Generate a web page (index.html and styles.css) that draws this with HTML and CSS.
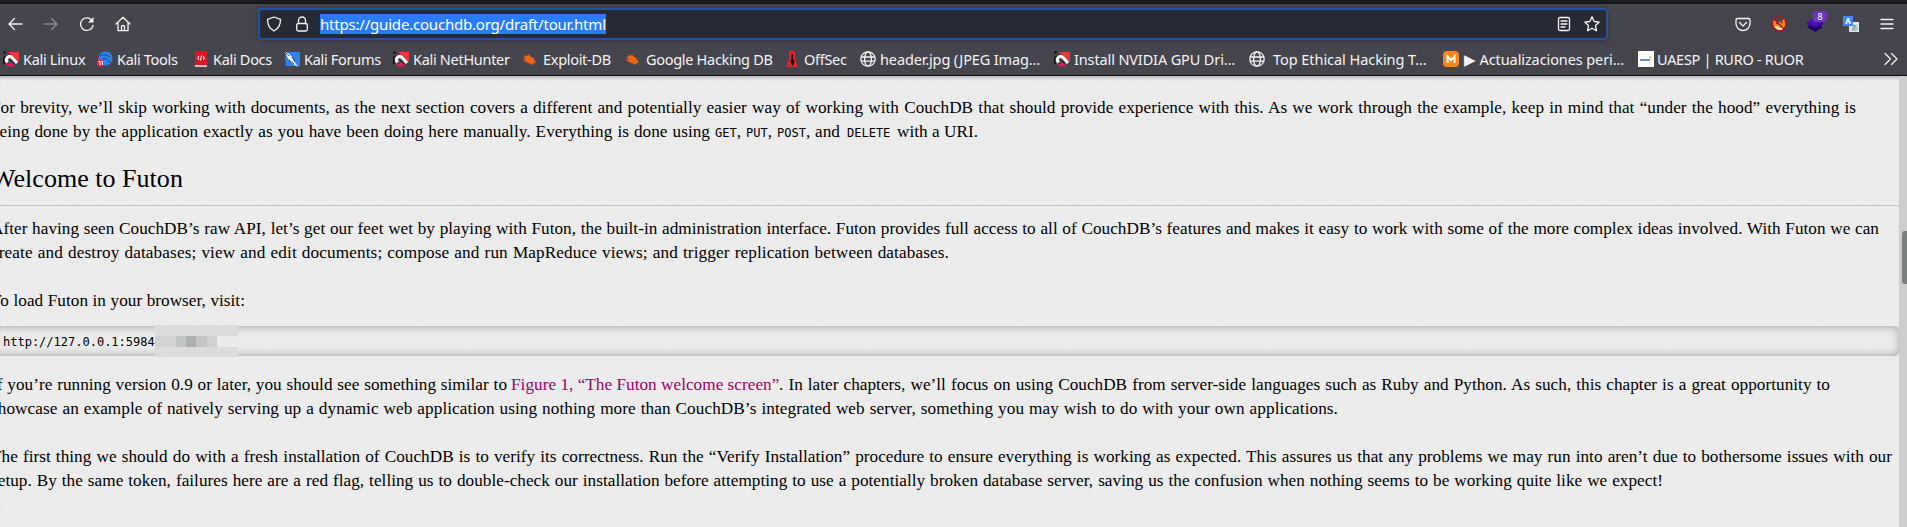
FILE: index.html
```html
<!DOCTYPE html>
<html lang="en">
<head>
<meta charset="utf-8">
<title>Getting Started</title>
<link rel="stylesheet" href="styles.css">
</head>
<body>
<svg width="0" height="0" class="defs">
  <symbol id="kali" viewBox="0 0 16 16"><path d="M5 1h11v10z" fill="#f2353a"/><path d="M0 1l2-1 1 2-2 1z" fill="#111"/><path d="M1.500 13A6 6 0 0 1 2.500 5" stroke="#111" stroke-width="1.500" fill="none"/><path d="M4.500 11.500C1.500 7.500 6 3.500 9 6.500L14 12" stroke="#fff" stroke-width="3" fill="none"/><path d="M2 12.500l4 3h7l-4-3.500-3-2 1 3z" fill="#dc1f50"/><path d="M6.500 8.500l4 4" stroke="#111" stroke-width="1" fill="none"/></symbol>
  <symbol id="bug" viewBox="0 0 16 16"><path d="M3 4.500l3 0 1-1.500 1 2 4 2.500 0 2 2 0-1 1 1 2-3-.5 0 2-3-1.500-2.500-.5-2.500-2-2-.5 2-1.500-1-1z" fill="#f06414"/><path d="M1 2l3 3M15 14l-3-3M0 8h4" stroke="#9b4a20" stroke-width=".7"/></symbol>
  <symbol id="globe" viewBox="0 0 16 16"><g fill="none" stroke="#f4f4f6" stroke-width="1.300"><circle cx="8" cy="8" r="7.200"/><ellipse cx="8" cy="8" rx="3.400" ry="7.200"/><path d="M1 6h14M1 10.200h14"/></g></symbol>
</svg>
<div class="tabs"></div>
<header class="nav">
  <div class="buttons">
    <svg class="i" viewBox="0 0 16 16"><path d="M15 8H2M7.500 2.500L2 8l5.500 5.500"/></svg>
    <svg class="i dim" viewBox="0 0 16 16"><path d="M1 8h13M8.500 2.500L14 8l-5.500 5.500"/></svg>
    <svg class="i" viewBox="0 0 16 16"><path d="M14 9.500A6.300 6.300 0 1 1 12.600 4"/><path d="M14.500 1v5.500H9z" class="solid"/></svg>
    <svg class="i" viewBox="0 0 16 16"><path d="M1 8l7-6.700L15 8M3 6.500V14.700h10V6.500M6.500 14.500v-4q0-1 1.500-1t1.500 1v4"/></svg>
  </div>
  <div class="url">
    <svg class="i" viewBox="0 0 16 16"><path d="M8 1l6.500 2.300C14.600 9 12 13 8 15 4 13 1.400 9 1.500 3.300z"/></svg>
    <svg class="i lock" viewBox="0 0 16 16"><rect x="2.700" y="7.500" width="10.600" height="7.500" rx="1.500"/><path d="M4.500 7.500V4.500a3.500 3.500 0 0 1 7 0v3"/></svg>
    <span class="address">https://guide.couchdb.org/draft/tour.html</span>
    <svg class="i reader" viewBox="0 0 16 16"><rect x="2.500" y="1.500" width="11" height="13" rx="1.500"/><path d="M5 5h6M5 8h6M5 11h4"/></svg>
    <svg class="i star" viewBox="0 0 16 16"><path d="M8 .8l2.200 4.700 5.100.6-3.800 3.500 1 5.200L8 12.300l-4.500 2.500 1-5.200L.7 6.100l5.100-.6z"/></svg>
  </div>
  <div class="tools">
    <svg class="i pocket" viewBox="0 0 16 16"><path d="M2.500 2.500h11q1.500 0 1.500 1.500v3.500a7 7 0 0 1-14 0V4q0-1.500 1.500-1.500zM4.500 6.500L8 10l3.500-3.500"/></svg>
    <svg class="fox" viewBox="0 0 16 16"><path d="M2 3l4 3h4l4-4 .5 7-3 5H7l-4.500-4z" fill="#ef8824"/><path d="M3 11l4-1 2 2 4-2-2 4H7z" fill="#f4ddc4"/><path d="M5 7l2 1M10 7l2-1" stroke="#4a2410"/><circle cx="8" cy="8" r="7.200" fill="none" stroke="#c90814" stroke-width="1.200"/><path d="M3 3l10 10" stroke="#c90814" stroke-width="1.300"/></svg>
    <span class="layers"><svg viewBox="0 0 16 16"><path d="M0 11l8-4 8 4-8 5z" fill="#20005c"/><path d="M0 6l8-5 8 5-8 5z" fill="#4a10b8"/><path d="M0 6v2l8 5 8-5V6l-8 5z" fill="#3200a0"/></svg><b class="badge">8</b></span>
    <svg class="translate" viewBox="0 0 16 16"><path d="M6 6h10v10H6z" fill="#dfe5e5"/><path d="M0 0h10v10H0z" fill="#4587f4"/><text x="5" y="8" class="ta">A</text><text x="11.500" y="14" class="tb">あ</text></svg>
    <svg class="i menu" viewBox="0 0 16 16"><path d="M2 3.500h12M2 8h12M2 12.500h12"/></svg>
  </div>
</header>
<nav class="bookmarks">
  <a class="bm b1"><svg><use href="#kali"/></svg><span>Kali Linux</span></a>
  <a class="bm b2"><svg viewBox="0 0 16 16"><circle cx="8.500" cy="7.500" r="7" fill="#2b83f5"/><path d="M3 5q5-3 10 1M5 8q5-2 8 4" stroke="#16427f" stroke-width="1" fill="none"/><rect y="8.500" width="7" height="7" rx="2" fill="#e52a34"/><path d="M1.500 10.500H3V14M4 10.500h1.500V14" stroke="#fff" fill="none"/></svg><span>Kali Tools</span></a>
  <a class="bm b3"><svg viewBox="0 0 16 16"><path d="M2 0h12v14H2z" fill="#dc1622"/><path d="M2 14h12v2H2z" fill="#e9b8b8"/><path d="M6 5L4.500 7 6 9M10 5l1.500 2L10 9M8.500 4.500l-1 5" stroke="#fff" fill="none"/></svg><span>Kali Docs</span></a>
  <a class="bm b4"><svg viewBox="0 0 16 16"><path d="M3 1h13v14H2l-1-8z" fill="#2b83f5"/><path d="M0 0l5 3 3 3 2 4 4 6-5-3-4-4z" fill="#fff"/><path d="M0 0l5 5M5 9l5 4M8 6l3 4" stroke="#111" stroke-width=".8"/></svg><span>Kali Forums</span></a>
  <a class="bm b5"><svg><use href="#kali"/></svg><span>Kali NetHunter</span></a>
  <a class="bm b6"><svg><use href="#bug"/></svg><span>Exploit-DB</span></a>
  <a class="bm b7"><svg><use href="#bug"/></svg><span>Google Hacking DB</span></a>
  <a class="bm b8"><svg viewBox="0 0 16 16"><path d="M5 0h6v7l3 9H2l3-9z" fill="#e5222c"/><path d="M7.500 3h1.500v4l1.500 4-2 4-2-4 1-4z" fill="#28080c"/></svg><span>OffSec</span></a>
  <a class="bm b9"><svg><use href="#globe"/></svg><span>header.jpg (JPEG Imag…</span></a>
  <a class="bm b10"><svg><use href="#kali"/></svg><span>Install NVIDIA GPU Dri…</span></a>
  <a class="bm b11"><svg><use href="#globe"/></svg><span>Top Ethical Hacking T…</span></a>
  <a class="bm b12"><svg viewBox="0 0 16 16"><rect width="16" height="16" rx="4" fill="#fb8418"/><path d="M4.500 12V5.500L8 9l3.500-3.500V12" stroke="#fff" stroke-width="2" fill="none"/></svg><span>▶ Actualizaciones peri…</span></a>
  <a class="bm b13"><svg viewBox="0 0 16 16"><path d="M0 0h16v16H0z" fill="#fff"/><path d="M2 9h10" stroke="#5271b8" stroke-width="1.600"/><path d="M11 6.500h2" stroke="#f0ad3d" stroke-width="2"/></svg><span>UAESP | RURO - RUOR</span></a>
  <svg class="i more" viewBox="0 0 16 16"><path d="M2 2.500L7.500 8 2 13.500M8.500 2.500L14 8l-5.500 5.500"/></svg>
</nav>
<div class="viewport">
<main class="page">
  <p class="p1"><span class="ln l1">For brevity, we’ll skip working with documents, as the next section covers a different and potentially easier way of working with CouchDB that should provide experience with this. As we work through the example, keep in mind that “under the hood” everything is</span>
  <span class="ln l2"><span class="s2a">being done by the application exactly as you have been doing here manually. Everything is done using</span><span class="s2b"><code>GET</code>,</span><span class="s2b"><code>PUT</code>,</span><span class="s2c"><code>POST</code>,</span><span class="s2d">and</span><span class="s2e"><code>DELETE</code></span><span class="s2f">with a URI.</span></span></p>
  <h2><span class="ln lh">Welcome to Futon</span></h2>
  <p><span class="ln l3">After having seen CouchDB’s raw API, let’s get our feet wet by playing with Futon, the built-in administration interface. Futon provides full access to all of CouchDB’s features and makes it easy to work with some of the more complex ideas involved. With Futon we can</span>
  <span class="ln l4">create and destroy databases; view and edit documents; compose and run MapReduce views; and trigger replication between databases.</span></p>
  <p><span class="ln l5">To load Futon in your browser, visit:</span></p>
  <pre>http://127.0.0.1:5984<span class="mosaic"><i class="m1"></i><i class="m2"></i><i class="m3"></i><i class="m4"></i><i class="m5"></i><i class="m6"></i><i class="m7"></i></span></pre>
  <p><span class="ln l6"><span class="s6a">If you’re running version 0.9 or later, you should see something similar to</span><a class="s6b">Figure 1, “The Futon welcome screen”</a><span class="s6c">. In later chapters, we’ll focus on using CouchDB from server-side languages such as Ruby and Python. As such, this chapter is a great opportunity to</span></span>
  <span class="ln l7">showcase an example of natively serving up a dynamic web application using nothing more than CouchDB’s integrated web server, something you may wish to do with your own applications.</span></p>
  <p><span class="ln l8">The first thing we should do with a fresh installation of CouchDB is to verify its correctness. Run the “Verify Installation” procedure to ensure everything is working as expected. This assures us that any problems we may run into aren’t due to bothersome issues with our</span>
  <span class="ln l9">setup. By the same token, failures here are a red flag, telling us to double-check our installation before attempting to use a potentially broken database server, saving us the confusion when nothing seems to be working quite like we expect!</span></p>
</main>
<aside class="scroll"><div class="thumb"></div></aside>
</div>
</body>
</html>
```
FILE: styles.css
```css
* { box-sizing: border-box; }
body { margin: 0; width: 1907px; height: 527px; overflow: hidden; background: #45454d; font-family: "Noto Sans", sans-serif; display: flex; flex-direction: column; }
.defs { position: absolute; }
.tabs { height: 4px; flex: none; background: #1c1c22; border-bottom: 1px solid #121217; }
.nav { height: 41px; flex: none; display: flex; align-items: center; padding: 0 0 1px 7px; }
.i { width: 16px; height: 16px; fill: none; stroke: #f4f4f6; stroke-width: 1.3; stroke-linecap: round; stroke-linejoin: round; flex: none; }
.dim { opacity: .4; }
.solid { fill: #f4f4f6; stroke: none; }
.buttons { display: flex; gap: 20px; width: 251px; }
.url { width: 1350px; height: 32px; border: 2px solid #2152a3; border-radius: 4px; background: #282a36; display: flex; align-items: center; padding-left: 6px; box-shadow: 0 1px 4px #0004; }
.lock { margin-left: 12px; }
.address { margin-left: 10px; width: 286px; height: 20px; line-height: 21px; font-size: 15px; color: #fff; background: #2a7cff; white-space: nowrap; letter-spacing: -.2px; }
.reader { margin-left: 950px; }
.star { margin-left: 12px; }
.tools { display: flex; align-items: center; margin-left: 127px; }
.fox, .translate, .layers svg { width: 16px; height: 16px; display: block; }
.fox { margin-left: 20px; }
.layers { margin-left: 20px; position: relative; }
.badge { position: absolute; left: 6px; top: -5px; width: 14px; height: 11px; border-radius: 2px; background: #6b35bd; color: #fff; font-size: 9px; line-height: 11px; text-align: center; font-weight: 400; }
.translate { margin-left: 20px; }
.ta { font: 700 8px "Noto Sans", sans-serif; fill: #fff; text-anchor: middle; }
.tb { font: 7px "Noto Sans CJK JP", sans-serif; fill: #607d80; text-anchor: middle; }
.menu { margin-left: 20px; }
.bookmarks { height: 31px; flex: none; display: flex; align-items: center; border-bottom: 1px solid #0c0912; padding: 0 0 2px 3px; color: #f4f4f6; }
.bm { display: flex; align-items: center; gap: 4px; font-size: 14.5px; letter-spacing: -.3px; white-space: nowrap; flex: none; }
.bm svg { width: 16px; height: 16px; flex: none; }
.b1 { width: 94px; } .b2 { width: 96px; } .b3 { width: 91px; } .b4 { width: 109px; } .b5 { width: 129px; } .b6 { width: 103px; gap: 5px; } .b7 { width: 159px; gap: 5px; } .b8 { width: 76px; } .b9 { width: 194px; letter-spacing: -.13px; } .b10 { width: 195px; letter-spacing: -.13px; } .b11 { width: 194px; gap: 8px; letter-spacing: -.05px; } .b12 { width: 195px; letter-spacing: -.1px; gap: 5px; } .b13 { width: 245px; gap: 3px; }
.viewport { flex: 1; display: flex; min-height: 0; overflow: hidden; }
.page { width: 1899px; flex: none; overflow: hidden; box-shadow: inset 0 4px 3px -2px #b9b5bd; background: #ededed url("data:image/svg+xml,%3Csvg xmlns='http://www.w3.org/2000/svg' width='200' height='200'%3E%3Cfilter id='n'%3E%3CfeTurbulence type='fractalNoise' baseFrequency='.45' numOctaves='2' stitchTiles='stitch'/%3E%3CfeColorMatrix type='saturate' values='0'/%3E%3C/filter%3E%3Crect width='200' height='200' filter='url(%23n)' opacity='.045'/%3E%3C/svg%3E"); color: #000; font: 17.2px/24px "Liberation Serif", serif; padding-top: 20px; }
p { margin: 0 0 24px; }
.ln { display: block; height: 24px; margin-left: -9px; white-space: nowrap; text-align-last: justify; letter-spacing: .03px; }
.l1 { width: 1865px; } .l3 { width: 1888px; } .l4 { width: 958px; letter-spacing: .12px; } .l5 { width: 254px; } .l7 { width: 1347px; letter-spacing: .08px; } .l8 { width: 1901px; } .l9 { width: 1672px; }
.l2, .l6 { display: flex; }
.s2a { width: 719px; margin-right: 5px; } .s2b { width: 27px; margin-right: 4px; } .s2c { width: 34px; margin-right: 4px; } .s2d { width: 27px; margin-right: 5px; } .s2e { width: 45px; margin-right: 5px; } .s2f { width: 81px; }
.s6a { width: 516px; margin-right: 4px; } .s6b { width: 268px; color: #a0006c; } .s6c { width: 1051px; }
code, pre { font-family: "DejaVu Sans Mono", monospace; font-size: 12px; letter-spacing: 0; }
.p1 { margin-bottom: 0; }
h2 { margin: 0 0 11px; height: 62px; border-bottom: 1px solid #c6c6c6; font-size: 26px; font-weight: 400; line-height: 24px; padding-top: 23px; }
.lh { width: 191px; }
h2 + p + p { margin-bottom: 13px; }
pre { margin: 0 0 17px -9px; width: 1908px; height: 30px; padding-left: 12px; line-height: 31px; border: 1px solid #c4c4c4; border-width: 1px 0; border-radius: 4px; box-shadow: inset 0 0 9px #aaa; display: flex; }
.mosaic { display: grid; grid-template: 11px 11px 10px / 21px 10px 10px 11px 10px 10px 11px; width: 83px; height: 32px; margin-top: -2px; background: #dcdcdc; flex: none; }
.mosaic i { grid-row: 2; }
.m1 { background: #d2d2d2; } .m2 { background: #c0c5c6; } .m3 { background: #afafaf; } .m4 { background: #c4c6c6; } .m5 { background: #d1d1d1; } .m6, .m7 { background: #ebebeb; }
.scroll { width: 8px; background: #cdcdcd; padding: 155px 0 0 3px; }
.thumb { height: 53px; background: #7c7f80; border-radius: 3px 0 0 3px; }
```
